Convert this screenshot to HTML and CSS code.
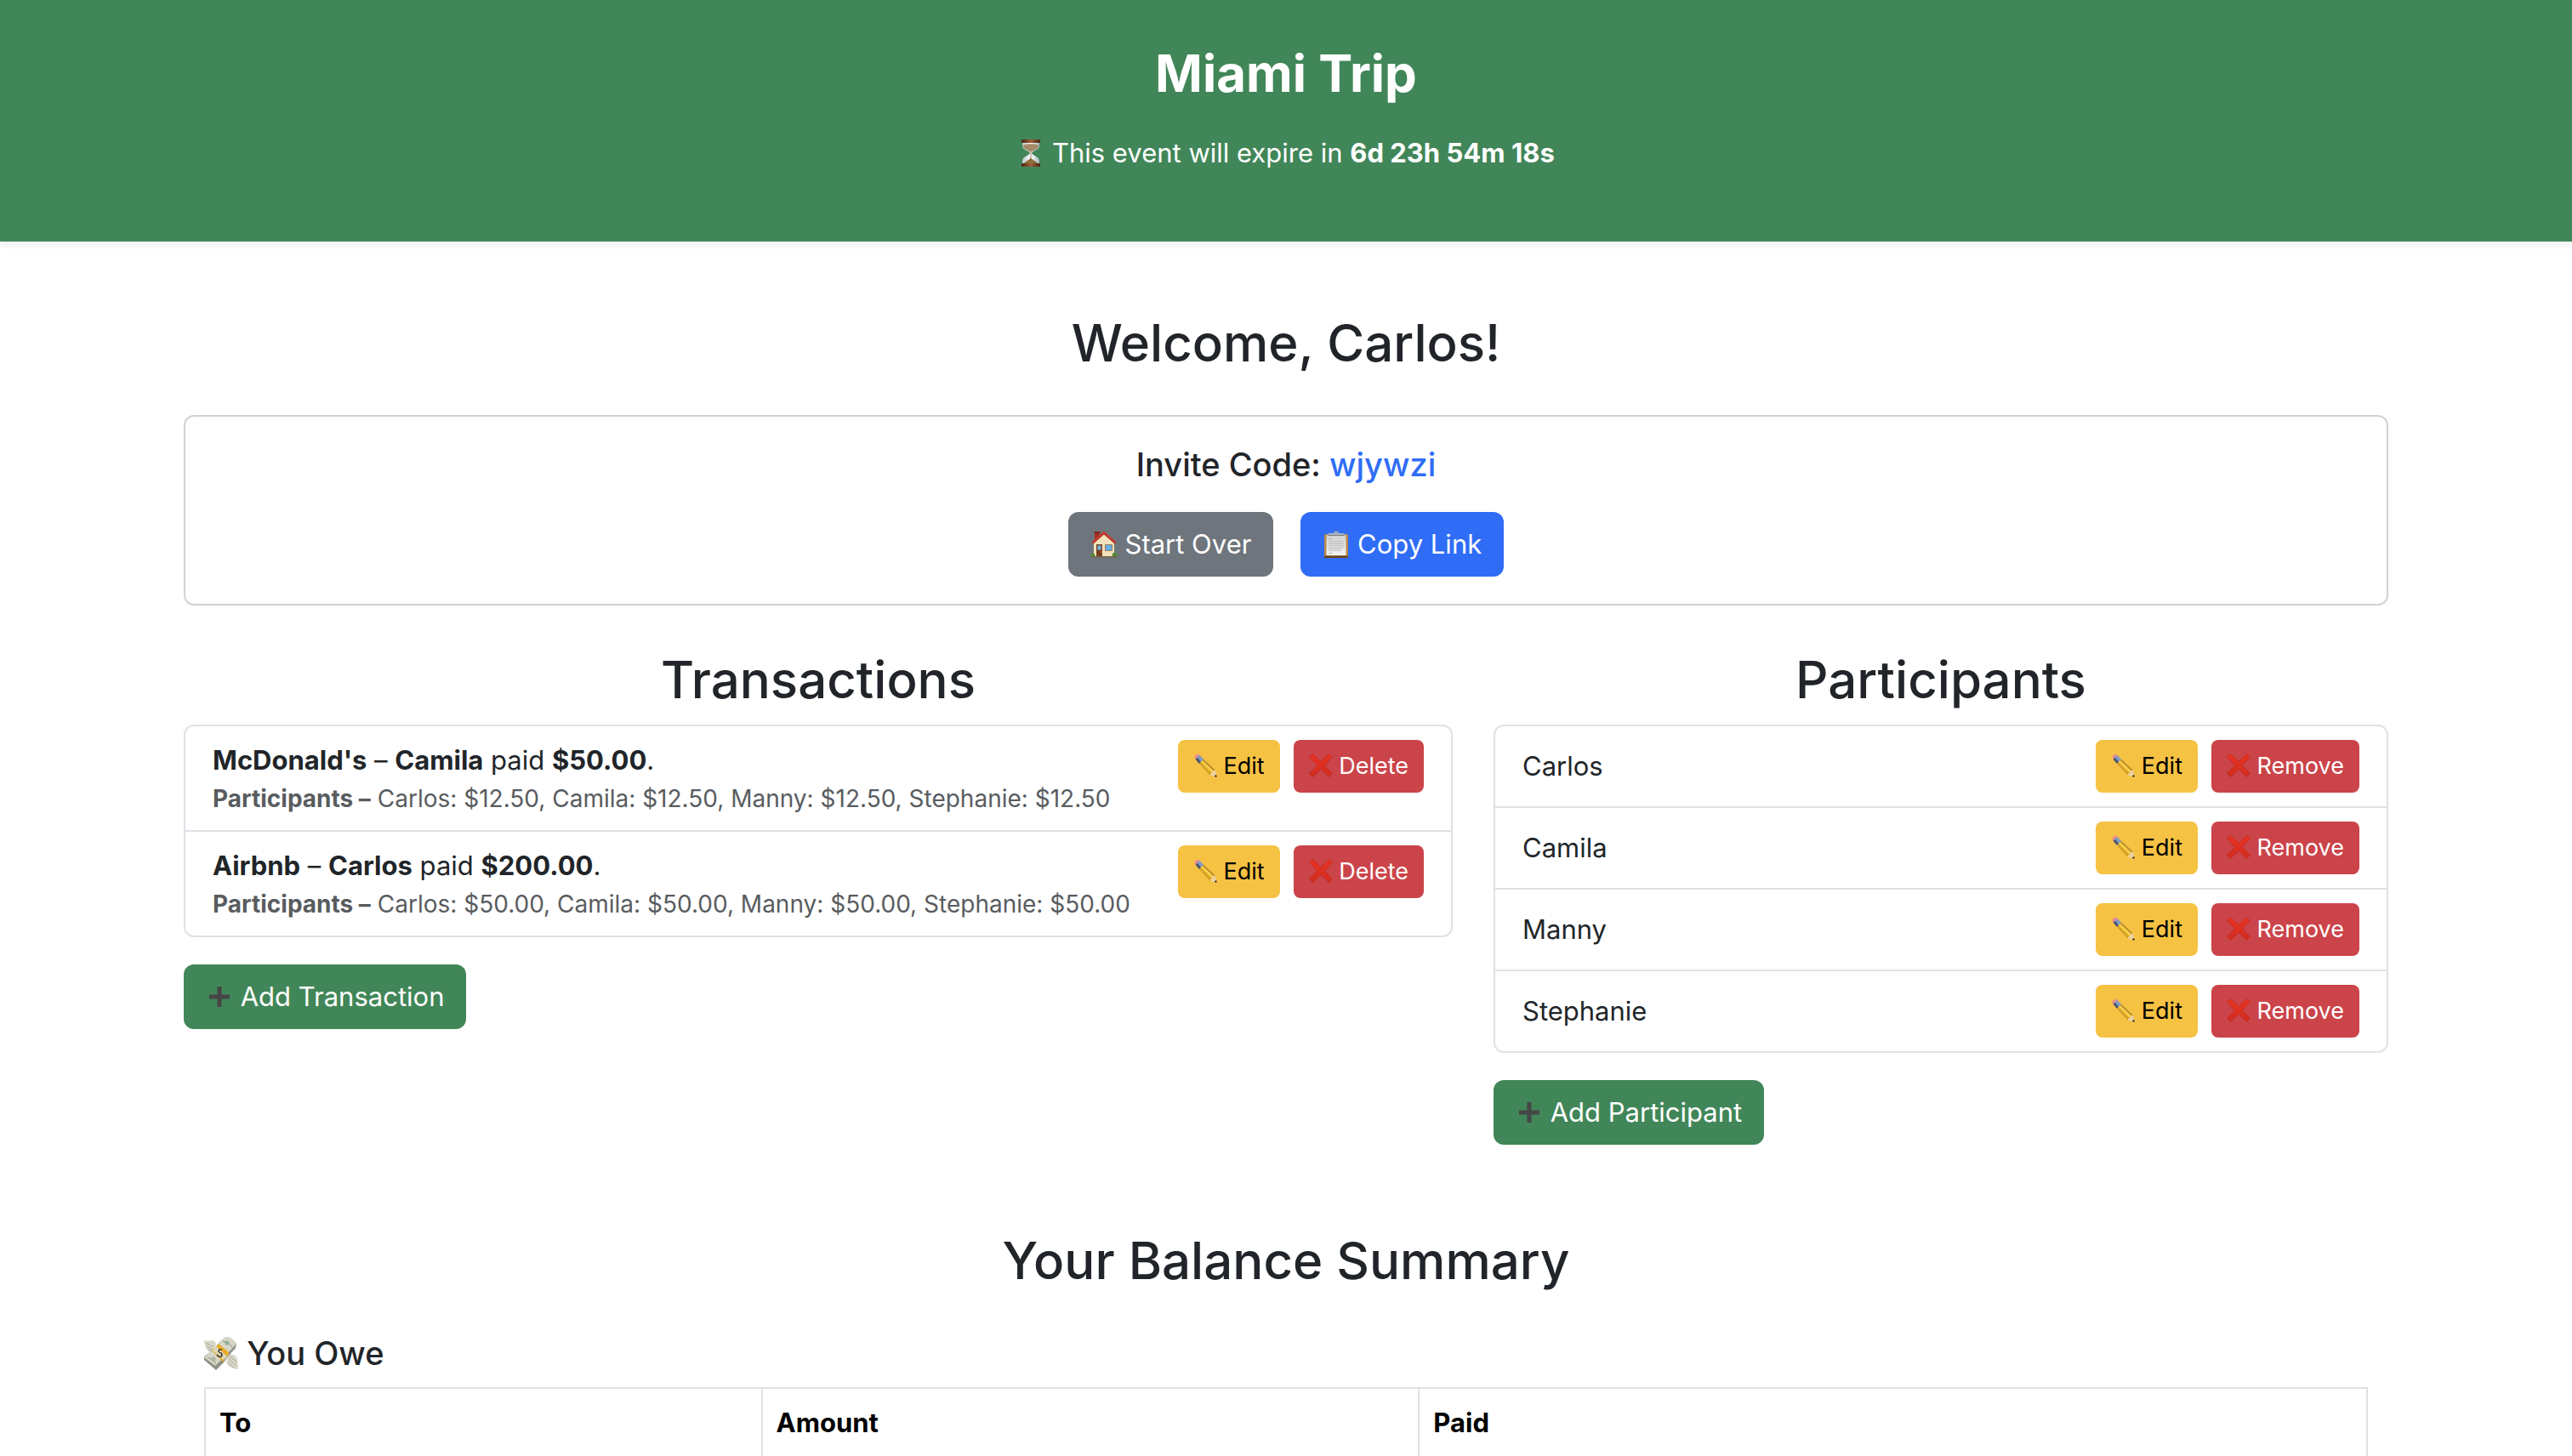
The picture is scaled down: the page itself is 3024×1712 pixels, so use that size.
FILE: index.html
```html
<!DOCTYPE html>
<html lang="en">
<head>
<meta charset="utf-8">
<meta name="viewport" content="width=device-width, initial-scale=1">
<title>Miami Trip</title>
<link rel="stylesheet" href="styles.css">
</head>
<body>
<svg class="sprite" aria-hidden="true">
  <defs>
    <linearGradient id="wood" x1="0" x2="1" y1="0" y2="0"><stop offset="0" stop-color="#4a2514"/><stop offset=".5" stop-color="#a0603c"/><stop offset="1" stop-color="#4a2514"/></linearGradient>
    <linearGradient id="glass" x1="0" x2="1" y1="0" y2="0"><stop offset="0" stop-color="#b9c4cc"/><stop offset=".5" stop-color="#ffffff"/><stop offset="1" stop-color="#a9b6bd"/></linearGradient>
    <linearGradient id="paper" x1="0" x2="0" y1="0" y2="1"><stop offset="0" stop-color="#cfcfcf"/><stop offset="1" stop-color="#f4f4f4"/></linearGradient>
    <linearGradient id="redx" x1="0" x2="0" y1="0" y2="1"><stop offset="0" stop-color="#e93323"/><stop offset="1" stop-color="#d12c1d"/></linearGradient>
  </defs>
  <symbol id="i-hourglass" viewBox="0 0 32 32">
    <path d="M6 2H26V8C26 12 18 13 17 16C18 19 26 20 26 25V30H6V25C6 20 14 19 15 16C14 13 6 12 6 8Z" fill="url(#glass)"/>
    <path d="M7 6.500Q16 4 25 6.500V8C25 11.500 17.500 13 16 15.500C14.500 13 7 11.500 7 8Z" fill="#a48a68"/>
    <path d="M15.600 15H16.400V22C18 24 22 25.500 24 28H8C10 25.500 14 24 15.600 22Z" fill="#8f6c3c"/>
    <rect x="5" y="0" width="22" height="4" rx="1" fill="url(#wood)"/>
    <rect x="5" y="28" width="22" height="4" rx="1" fill="url(#wood)"/>
  </symbol>
  <symbol id="i-house" viewBox="0 0 32 32">
    <rect x="5" y="2" width="6" height="9" fill="#a33225"/><rect x="4.500" y="1" width="7" height="2" fill="#7b251b"/>
    <path d="M4 14L16 2L28 14V31H4Z" fill="#f3e2b9"/>
    <path d="M16 .500L1.500 13.500L3.200 15.200L16 4L28.800 15.200L30.500 13.500Z" fill="#d0382c"/>
    <path d="M3.200 15.200L16 4L28.800 15.200" fill="none" stroke="#7d221a" stroke-width=".8"/>
    <rect x="7" y="16" width="7" height="15" fill="#7a3f22"/><rect x="8.500" y="17.500" width="4" height="5" fill="#6db8ea"/><circle cx="12.700" cy="25" r=".6" fill="#e8c25a"/>
    <rect x="17" y="16" width="9" height="8" fill="#9a7a58"/><rect x="18" y="17" width="7" height="6" fill="#63b1e6"/>
    <circle cx="3" cy="29" r="2.500" fill="#4f8a35"/><circle cx="28.500" cy="28.500" r="2.800" fill="#4f8a35"/><rect x="1" y="30" width="30" height="1.500" fill="#75634c"/>
  </symbol>
  <symbol id="i-clipboard" viewBox="0 0 32 32">
    <rect x="2" y="4" width="28" height="28" rx="1.500" fill="#b98a45"/><rect x="2" y="29.500" width="28" height="2.500" rx="1" fill="#6b471d"/>
    <rect x="4.500" y="5" width="23" height="24" fill="url(#paper)"/>
    <path d="M7 10H11M7 13H24M7 15.500H25M7 18H25M7 20.500H24M7 23H22M7 26.500H12" stroke="#b7b7b7" stroke-width="1"/>
    <path d="M6 6V4.500Q6 3 8 3H13Q13.500 .300 16 .300Q18.500 .300 19 3H24Q26 3 26 4.500V6Z" fill="#aeb4bd"/><path d="M6 5.500H26" stroke="#777d86" stroke-width="1"/><circle cx="16" cy="2.300" r=".8" fill="#5b79c0"/>
  </symbol>
  <symbol id="i-pencil" viewBox="0 0 28 28">
    <path d="M1.500 5Q1 3 3 1.800Q5 .300 7 1.200L9.500 3.500L4 9Z" fill="#e88d93"/>
    <path d="M7 2.200L12.200 6.700L7 12L2.700 6.700Z" fill="#7f9cc4"/><path d="M2.700 6.700L4.700 4.700L9 9.900L7 12Z" fill="#4a5568"/>
    <path d="M12.200 6.700L26 19.500L27.500 27.500L19.500 25.500L7 12Z" fill="#f2c02e"/>
    <path d="M12.200 6.700L26 19.500L24.300 21.200L10.500 8.400Z" fill="#c3922a"/><path d="M8.700 10.300L21.500 23.500L19.500 25.500L7 12Z" fill="#d3a02b"/><path d="M10.500 8.400L24 21L23 22L9.700 9.200Z" fill="#fbe067"/>
    <path d="M26 19.500L27.500 27.500L19.500 25.500Q20.500 22.500 22.500 22.500Q22.500 20 26 19.500Z" fill="#edd1a2"/><path d="M27 24.800L27.700 27.700L24.700 27Z" fill="#222"/>
  </symbol>
  <symbol id="i-cross" viewBox="0 0 28 28"><path d="M4.500 .500L14 9.500L23.500 .500L27.500 4L18.500 14L27.500 23.500L23.500 27.500L14 18.500L4.500 27.500L.500 23.500L9.500 14L.500 4Z" fill="url(#redx)" stroke="#b5291f" stroke-width=".6"/></symbol>
  <symbol id="i-plus" viewBox="0 0 32 32"><path d="M13.500 4H18.500V13.500H28V18.500H18.500V28H13.500V18.500H4V13.500H13.500Z" fill="#464646"/></symbol>
  <symbol id="i-money" viewBox="0 0 40 40">
    <path d="M0 5Q6 6 9 5Q13 5 14 10L12 20Q4 19 2 14Q0 9 0 5Z" fill="#d9d7c8"/><path d="M2 8L11 13M3 12L10 16M5 16L10 18" stroke="#aaa899" stroke-width="1"/>
    <path d="M40 39Q34 39 30 36Q25 33 27 25L30 21Q38 22 39 27Q40 33 40 39Z" fill="#d9d7c8"/><path d="M29 27L38 35M30 24L38 30M28 31L35 37" stroke="#aaa899" stroke-width="1"/>
    <path d="M20 5L26 1Q32 1 38 9L37 14L27 25L24 30L14 40L0 28V24L11 16Z" fill="#8f9184"/>
    <path d="M20 5L26 1Q32 1 38 9L27 21L21 27L13 35L0 25L12 15Z" fill="#d6d7c6"/>
    <path d="M22 6Q29 7 33 13M4 25Q11 27 14 32" fill="none" stroke="#898c7d" stroke-width="1"/><circle cx="27" cy="8" r="2.600" fill="#93b39e"/><circle cx="11" cy="27" r="2.600" fill="#aab4a2"/>
    <path d="M14 12L17 9L29 19V22L27 24Z" fill="#e9ad2b"/><path d="M9 17L12 14L24 25V28L22 30Z" fill="#e9ad2b"/><path d="M13 13L27 24L23 28L10 17Z" fill="#ded9b7"/>
    <path d="M21 16Q17 15 17 18Q18 20 20 20Q22 22 20 24Q17 25 15 22" fill="none" stroke="#40382a" stroke-width="1.600"/>
  </symbol>
</svg>

<header class="banner">
  <h1 class="banner-title">Miami Trip</h1>
  <p class="banner-text"><svg class="emoji"><use href="#i-hourglass"/></svg> This event will expire in <strong>6d 23h 54m 18s</strong></p>
</header>

<main class="container">
  <h2 class="heading welcome">Welcome, Carlos!</h2>
  <section class="card">
    <h3 class="subheading">Invite Code: <span class="code">wjywzi</span></h3>
    <div class="card-actions">
      <button type="button" class="btn btn-secondary"><svg class="emoji"><use href="#i-house"/></svg> Start Over</button>
      <button type="button" class="btn btn-primary"><svg class="emoji"><use href="#i-clipboard"/></svg> Copy Link</button>
    </div>
  </section>

  <div class="columns">
    <section>
      <h2 class="heading">Transactions</h2>
      <ul class="list">
        <li class="list-item">
          <div>
            <div><strong>McDonald's</strong> – <strong>Camila</strong> paid <strong>$50.00</strong>.</div>
            <div class="detail"><strong>Participants –</strong> Carlos: $12.50, Camila: $12.50, Manny: $12.50, Stephanie: $12.50</div>
          </div>
          <div class="actions">
            <button type="button" class="btn btn-sm btn-warning"><svg class="emoji"><use href="#i-pencil"/></svg> Edit</button>
            <button type="button" class="btn btn-sm btn-danger"><svg class="emoji"><use href="#i-cross"/></svg> Delete</button>
          </div>
        </li>
        <li class="list-item">
          <div>
            <div><strong>Airbnb</strong> – <strong>Carlos</strong> paid <strong>$200.00</strong>.</div>
            <div class="detail"><strong>Participants –</strong> Carlos: $50.00, Camila: $50.00, Manny: $50.00, Stephanie: $50.00</div>
          </div>
          <div class="actions">
            <button type="button" class="btn btn-sm btn-warning"><svg class="emoji"><use href="#i-pencil"/></svg> Edit</button>
            <button type="button" class="btn btn-sm btn-danger"><svg class="emoji"><use href="#i-cross"/></svg> Delete</button>
          </div>
        </li>
      </ul>
      <button type="button" class="btn btn-success"><svg class="emoji"><use href="#i-plus"/></svg> Add Transaction</button>
    </section>

    <section>
      <h2 class="heading">Participants</h2>
      <ul class="list">
        <li class="list-item person"><span>Carlos</span>
          <div class="actions">
            <button type="button" class="btn btn-sm btn-warning"><svg class="emoji"><use href="#i-pencil"/></svg> Edit</button>
            <button type="button" class="btn btn-sm btn-danger"><svg class="emoji"><use href="#i-cross"/></svg> Remove</button>
          </div>
        </li>
        <li class="list-item person"><span>Camila</span>
          <div class="actions">
            <button type="button" class="btn btn-sm btn-warning"><svg class="emoji"><use href="#i-pencil"/></svg> Edit</button>
            <button type="button" class="btn btn-sm btn-danger"><svg class="emoji"><use href="#i-cross"/></svg> Remove</button>
          </div>
        </li>
        <li class="list-item person"><span>Manny</span>
          <div class="actions">
            <button type="button" class="btn btn-sm btn-warning"><svg class="emoji"><use href="#i-pencil"/></svg> Edit</button>
            <button type="button" class="btn btn-sm btn-danger"><svg class="emoji"><use href="#i-cross"/></svg> Remove</button>
          </div>
        </li>
        <li class="list-item person"><span>Stephanie</span>
          <div class="actions">
            <button type="button" class="btn btn-sm btn-warning"><svg class="emoji"><use href="#i-pencil"/></svg> Edit</button>
            <button type="button" class="btn btn-sm btn-danger"><svg class="emoji"><use href="#i-cross"/></svg> Remove</button>
          </div>
        </li>
      </ul>
      <button type="button" class="btn btn-success"><svg class="emoji"><use href="#i-plus"/></svg> Add Participant</button>
    </section>
  </div>

  <section class="summary">
    <h2 class="heading">Your Balance Summary</h2>
    <div class="owed">
      <h3 class="subheading" id="owe"><svg class="emoji"><use href="#i-money"/></svg> You Owe</h3>
      <table class="table" aria-labelledby="owe">
        <colgroup><col class="col-to"><col class="col-amount"><col></colgroup>
        <thead><tr><th scope="col">To</th><th scope="col">Amount</th><th scope="col">Paid</th></tr></thead>
      </table>
    </div>
  </section>
</main>
</body>
</html>
```
FILE: styles.css
```css
:root {
  --green: #418658;
  --line: #dee2e6;
  --ink: #212529;
}

*, *::before, *::after { box-sizing: border-box; }

html { overflow: hidden; }

body {
  margin: 0;
  background: #fff;
  color: var(--ink);
  font-family: Inter, "Liberation Sans", sans-serif;
  font-size: 31px;
  line-height: 48px;
}

h1, h2, h3, p, ul { margin: 0; padding: 0; }
strong { font-weight: 700; }

.sprite { display: block; width: 0; height: 0; }

.emoji {
  display: inline-block;
  width: 32px;
  height: 32px;
  vertical-align: -5px;
}

.banner {
  padding: 48px 0;
  background: var(--green);
  color: #fff;
  text-align: center;
  box-shadow: 0 4px 8px rgba(0, 0, 0, .075);
}
.banner-title {
  margin-bottom: 32px;
  font-size: 60px;
  font-weight: 700;
  line-height: 76px;
}
.banner-text { margin-bottom: 32px; }

.container {
  max-width: 2640px;
  margin: 0 auto;
  padding: 0 24px;
}

.heading {
  margin-bottom: 14px;
  font-size: 60px;
  font-weight: 500;
  line-height: 78px;
  text-align: center;
}
.welcome { margin: 80px 0 46px; }

.subheading {
  font-size: 38px;
  font-weight: 500;
  line-height: 48px;
}

.card {
  padding: 32px;
  border: 2px solid #d2d2d2;
  border-radius: 12px;
  text-align: center;
}
.code { color: #306df6; }
.card-actions {
  display: flex;
  justify-content: center;
  gap: 32px;
  margin-top: 32px;
}

.btn {
  padding: 12px 24px;
  border: 2px solid transparent;
  border-radius: 12px;
  color: #fff;
  font: inherit;
  white-space: nowrap;
  cursor: pointer;
}
.btn-secondary { background: #6e757c; }
.btn-primary { background: #306df6; }
.btn-success { background: var(--green); }
.btn-danger { background: #cb444a; }
.btn-warning { background: #f6c244; color: #000; }
.btn-sm {
  padding: 8px 16px;
  border-radius: 8px;
  font-size: 27px;
  line-height: 42px;
}
.btn-sm .emoji { width: 28px; height: 28px; vertical-align: -4px; }

.columns {
  display: grid;
  grid-template-columns: 1492fr 1052fr;
  gap: 48px;
  margin-top: 48px;
}

.list {
  margin-bottom: 32px;
  border: 2px solid var(--line);
  border-radius: 12px;
  list-style: none;
}
.list-item {
  display: flex;
  justify-content: space-between;
  align-items: flex-start;
  padding: 16px 32px;
}
.list-item + .list-item { border-top: 2px solid var(--line); }
.person { align-items: center; }
.detail {
  color: #595c5f;
  font-size: 28px;
  line-height: 42px;
}
.actions { display: flex; gap: 16px; }

.summary { margin-top: 97px; }
.owed { padding: 32px 24px 0; }
.owed .emoji { width: 40px; height: 40px; vertical-align: -6px; }

.table {
  width: 100%;
  margin-top: 16px;
  border-collapse: collapse;
  table-layout: fixed;
}
.table th {
  padding: 16px;
  border: 2px solid var(--line);
  color: #000;
  font-weight: 700;
  text-align: left;
}
.col-to { width: 25.75%; }
.col-amount { width: 30.4%; }
```
